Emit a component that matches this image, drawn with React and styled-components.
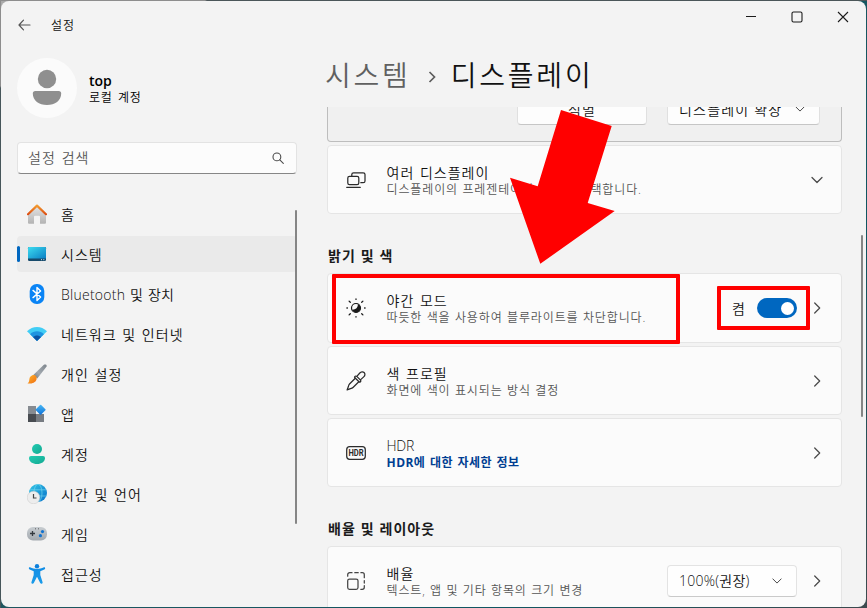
import React from "react";
import styled, { createGlobalStyle } from "styled-components";

const GlobalStyle = createGlobalStyle`
  html, body { margin: 0; padding: 0; overflow: hidden; }
  body { font-family: "Open Sans", "Noto Sans CJK KR", sans-serif; font-weight: 350; color: #111; }
  * { box-sizing: border-box; }
`;

const Desktop = styled.div`
  width: 867px;
  height: 608px;
  padding: 1px;
  background:
    linear-gradient(90deg, #8d8d8d 0 205px, #4b5659 207px 100%) top / 100% 1px no-repeat,
    linear-gradient(180deg, #8d8d8d 0 86px, #46565a 88px 100%) left / 1px 100% no-repeat,
    linear-gradient(135deg, #a9a9a9 0 8%, #2c555c 12%, #0f5662 75%, #3c4a4e 100%);
`;

const Window = styled.div`
  position: relative;
  width: 865px;
  height: 606px;
  display: flex;
  background: #f3f3f3;
  border-radius: 8px;
  overflow: hidden;
`;

const Sidebar = styled.aside`
  width: 310px;
  flex: none;
  padding: 0 14px 0 16px;
  display: flex;
  flex-direction: column;
`;

const TitleBar = styled.div`
  height: 48px;
  display: flex;
  align-items: center;
  gap: 20px;
`;

const BackButton = styled.div`
  width: 14px;
  display: flex;
`;

const AppName = styled.div`
  font-size: 12px;
  line-height: 16px;
  letter-spacing: 0.9px;
  padding-top: 2px;
`;

const Profile = styled.div`
  height: 60px;
  margin-top: 9px;
  display: flex;
  align-items: center;
  gap: 12px;
`;

const Avatar = styled.div`
  width: 60px;
  height: 60px;
  border-radius: 50%;
  background: #fbfbfb;
  display: flex;
`;

const ProfileName = styled.div`
  font-size: 14px;
  line-height: 16px;
  font-weight: 600;
  letter-spacing: -0.1px;
  margin-top: 4px;
  color: #000;
`;

const ProfileKind = styled.div`
  font-size: 12px;
  line-height: 18px;
  letter-spacing: 0.8px;
  word-spacing: 1.4px;
  color: #000;
`;

const SearchBox = styled.div`
  height: 32px;
  margin-top: 24px;
  padding: 0 12px 0 10px;
  display: flex;
  align-items: center;
  justify-content: space-between;
  background: #fcfcfc;
  border: 1px solid #e3e3e3;
  border-bottom-color: #868686;
  border-radius: 4px;
  font-size: 14px;
  line-height: 20px;
  letter-spacing: 1px;
  word-spacing: 1.3px;
  color: #5a5a5a;
`;

const NavList = styled.nav`
  margin-top: 22px;
  display: flex;
  flex-direction: column;
  gap: 4px;
`;

const NavItem = styled.div`
  position: relative;
  height: 36px;
  flex: none;
  padding-left: 10px;
  display: flex;
  align-items: center;
  gap: 14px;
  border-radius: 4px;
  background: ${(p) => (p.$active ? "#eaeaea" : "transparent")};
  font-size: 14px;
  line-height: 20px;
  white-space: nowrap;

  &::before {
    content: "";
    position: absolute;
    left: 0;
    top: 10px;
    width: 3px;
    height: 16px;
    border-radius: 2px;
    background: ${(p) => (p.$active ? "#0067c0" : "transparent")};
  }
`;

const NavIcon = styled.span`
  display: flex;
  margin-top: -1px;
`;

const NavLabel = styled.span`
  letter-spacing: ${(p) => p.$spacing ?? 1.05}px;
  word-spacing: 0.9px;
  padding-top: 2px;
`;

const Main = styled.main`
  flex: 1;
  min-width: 0;
  display: flex;
  flex-direction: column;
`;

const WindowControls = styled.div`
  height: 32px;
  padding-right: 17px;
  display: flex;
  align-items: center;
  justify-content: flex-end;
  gap: 34px;
`;

const Breadcrumb = styled.h1`
  margin: 0;
  height: 74px;
  padding: 10px 0 0 14px;
  display: flex;
  align-items: center;
  font-size: 28px;
  line-height: 40px;
  font-weight: 350;
  letter-spacing: 2.8px;
`;

const Crumb = styled.span`
  color: ${(p) => (p.$muted ? "#606060" : "#111")};
`;

const CrumbChevron = styled.span`
  display: flex;
  margin: 3px 13.5px 0 17.5px;
`;

const ScrollArea = styled.div`
  flex: 1;
  min-height: 0;
  overflow: hidden;
  padding: 0 24px 0 16px;
  display: flex;
  flex-direction: column;
`;

const PreviewPanel = styled.div`
  height: 35px;
  flex: none;
  padding-right: 21px;
  display: flex;
  justify-content: flex-end;
  align-items: flex-start;
  gap: 20px;
  background: #f0f0f0;
  border: 1px solid #bdbdbd;
  border-top: 0;
  border-radius: 0 0 4px 4px;
`;

const PanelButton = styled.div`
  height: 18px;
  width: ${(p) => p.$width}px;
  padding: ${(p) => (p.$select ? "0 14px 0 11px" : "0")};
  display: flex;
  align-items: flex-end;
  justify-content: ${(p) => (p.$select ? "space-between" : "center")};
  background: #fdfdfd;
  border: 1px solid #e0e0e0;
  border-top: 0;
  border-bottom-color: #c6c6c6;
  border-radius: 0 0 4px 4px;
  overflow: hidden;
  font-size: 14px;
  line-height: 20px;
  letter-spacing: 1.2px;
  white-space: nowrap;
`;

const ButtonText = styled.span`
  margin-bottom: 4px;
`;

const ButtonChevron = styled.span`
  display: flex;
  margin-bottom: 10px;
`;

const Card = styled.section`
  height: ${(p) => p.$height ?? 69}px;
  flex: none;
  margin-top: ${(p) => p.$gap ?? 3}px;
  padding: 0 18px;
  display: flex;
  align-items: center;
  background: #fbfbfb;
  border: 1px solid #e5e5e5;
  border-radius: 4px;
`;

const CardIcon = styled.div`
  width: 20px;
  height: 20px;
  display: flex;
  flex: none;
`;

const CardText = styled.div`
  flex: 1;
  min-width: 0;
  margin-left: 20.5px;
  padding-top: 4px;
  white-space: nowrap;
`;

const CardTitle = styled.div`
  font-size: 14px;
  line-height: 16px;
  letter-spacing: ${(p) => p.$spacing ?? 1}px;
  word-spacing: 1px;
`;

const CardNote = styled.div`
  font-size: 12px;
  line-height: 18px;
  letter-spacing: 0.88px;
  word-spacing: 0.4px;
  color: #555;
`;

const CardLink = styled.div`
  font-size: 12px;
  line-height: 18px;
  font-weight: 700;
  letter-spacing: 0.45px;
  word-spacing: 1px;
  color: #003e92;
`;

const SectionTitle = styled.h2`
  margin: ${(p) => p.$gap}px 0 0;
  padding-left: 1px;
  font-size: 14px;
  line-height: 20px;
  font-weight: 700;
  letter-spacing: 1.1px;
  word-spacing: 0;
  color: #1b1b1b;
`;

const StateLabel = styled.span`
  font-size: 14px;
  line-height: 20px;
  margin-right: 12px;
  padding-top: 2px;
`;

const Toggle = styled.div`
  width: 40px;
  height: 20px;
  padding-right: 3.5px;
  margin-right: 14px;
  display: flex;
  align-items: center;
  justify-content: flex-end;
  border-radius: 10px;
  background: #0067c0;
`;

const Knob = styled.div`
  width: 13px;
  height: 13px;
  border-radius: 50%;
  background: #fff;
`;

const ScaleSelect = styled.div`
  width: 130px;
  height: 32px;
  margin-right: 14px;
  padding: 0 14px 0 11px;
  display: flex;
  align-items: center;
  justify-content: space-between;
  background: #fefefe;
  border: 1px solid #e3e3e3;
  border-bottom-color: #cacaca;
  border-radius: 4px;
  font-size: 14px;
  line-height: 20px;
  letter-spacing: 0.25px;
`;

const ScrollThumb = styled.div`
  position: absolute;
  left: ${(p) => p.$x}px;
  top: ${(p) => p.$y}px;
  width: 2px;
  height: ${(p) => p.$length}px;
  border-radius: 1px;
  background: #858585;
`;

const Highlight = styled.div`
  position: absolute;
  left: ${(p) => p.$x}px;
  top: ${(p) => p.$y}px;
  width: ${(p) => p.$w}px;
  height: ${(p) => p.$h}px;
  border: 4px solid #f00;
  border-radius: 1px;
`;

const PointerArrow = styled.svg`
  position: absolute;
  left: 509px;
  top: 109px;
`;

const Chevron = ({ down, small }) => (
  <svg width={small ? 10 : 12} height={small ? 10 : 12} viewBox="0 0 12 12" fill="none" stroke="#4a4a4a" strokeWidth={small ? 1.2 : 1.25} strokeLinecap="round" strokeLinejoin="round">
    <path d={down ? "M1 3.500 6 8.500 11 3.500" : "M3.700 1 8.700 6 3.700 11"} />
  </svg>
);

const HomeIcon = () => (
  <svg width="20" height="20" viewBox="0 0 20 20">
    <defs>
      <linearGradient id="homeWall" x1="0" y1="0" x2="0" y2="1"><stop stopColor="#e6e6e6" /><stop offset="1" stopColor="#b3b3b3" /></linearGradient>
      <linearGradient id="homeRoof" x1="0" y1="0" x2="0" y2="1"><stop stopColor="#f29a2e" /><stop offset="1" stopColor="#dd4f14" /></linearGradient>
    </defs>
    <path d="M1 9.500 10 1.500l9 8v9.300a1 1 0 0 1-1 1h-5v-7a1 1 0 0 0-1-1H8a1 1 0 0 0-1 1v7H2a1 1 0 0 1-1-1z" fill="url(#homeWall)" />
    <path d="M1 10.200 10 1.600l9 8.600" fill="none" stroke="url(#homeRoof)" strokeWidth="2.200" strokeLinecap="round" strokeLinejoin="round" />
  </svg>
);

const SystemIcon = () => (
  <svg width="20" height="20" viewBox="0 0 20 20">
    <defs><linearGradient id="sysScreen" x1="0" y1="0" x2="1" y2="1"><stop stopColor="#3ddcf0" /><stop offset="1" stopColor="#0a7fc4" /></linearGradient></defs>
    <rect x="1" y="3" width="18" height="14" rx="1.200" fill="#174a6b" />
    <path d="M2.200 3h15.600A1.200 1.200 0 0 1 19 4.200V14.500H1V4.200A1.200 1.200 0 0 1 2.200 3z" fill="url(#sysScreen)" />
    <path d="M14 15.700h1M16.300 15.700h1" stroke="#c9e8f5" strokeWidth="1" />
  </svg>
);

const BluetoothIcon = () => (
  <svg width="20" height="20" viewBox="0 0 20 20">
    <rect x="2.700" y="0" width="14.600" height="20" rx="7" fill="#0a84f5" />
    <path d="M6 6.400 13.600 13 10 16.500V3.500L13.600 7 6 13.600" fill="none" stroke="#fff" strokeWidth="1.400" strokeLinejoin="round" strokeLinecap="round" />
  </svg>
);

const WifiIcon = () => (
  <svg width="20" height="20" viewBox="0 0 20 20">
    <path d="M10 17 0 7.200C5.700 1.500 14.300 1.500 20 7.200z" fill="#41cdf5" />
    <path d="M10 17 3.100 10.200C7 6.400 13 6.400 16.900 10.200z" fill="#1e93e0" />
    <path d="M10 17 6 13C8.200 10.900 11.800 10.900 14 13z" fill="#0a53a5" />
  </svg>
);

const BrushIcon = () => (
  <svg width="20" height="20" viewBox="0 0 20 20">
    <defs>
      <linearGradient id="brushHandle" x1="1" y1="0" x2="0" y2="1"><stop stopColor="#7d858c" /><stop offset=".6" stopColor="#a2a9b0" /><stop offset="1" stopColor="#737b82" /></linearGradient>
      <linearGradient id="brushTip" x1="0" y1="0" x2="1" y2="1"><stop stopColor="#ffb52b" /><stop offset="1" stopColor="#ef6c12" /></linearGradient>
    </defs>
    <path d="M6.300 11 16.600 1C18 .100 20.100 .600 19.600 2.600L10.300 14.400z" fill="url(#brushHandle)" />
    <path d="M5 11.500c2.500-1.500 5.500 1 4.500 4C8.500 19 4 20 .5 19.500c1.800-1.300 1.500-2.500 2-5 .2-1.400 1.200-2.500 2.500-3z" fill="url(#brushTip)" />
  </svg>
);

const AppsIcon = () => (
  <svg width="20" height="20" viewBox="0 0 20 20">
    <defs><linearGradient id="appTile" x1="0" y1="0" x2="1" y2="1"><stop stopColor="#49b9f5" /><stop offset="1" stopColor="#0d70d8" /></linearGradient></defs>
    <path d="M1 2h8v8H1z" fill="#868b91" />
    <path d="M1 10h8v8H1z" fill="#484c51" />
    <path d="M9 10h8v8H9z" fill="#777c82" />
    <rect x="9.900" y="1.900" width="7.600" height="7.600" rx=".8" transform="rotate(45 13.600 5.600)" fill="url(#appTile)" />
  </svg>
);

const AccountIcon = () => (
  <svg width="20" height="20" viewBox="0 0 20 20">
    <defs><linearGradient id="acct" x1="0" y1="0" x2="1" y2="1"><stop stopColor="#23cbb1" /><stop offset="1" stopColor="#13a992" /></linearGradient></defs>
    <circle cx="10" cy="5" r="5" fill="url(#acct)" />
    <path d="M4 12h12a2 2 0 0 1 2 2c0 3.800-3.600 6-8 6s-8-2.200-8-6a2 2 0 0 1 2-2z" fill="url(#acct)" />
  </svg>
);

const TimeIcon = () => (
  <svg width="20" height="20" viewBox="0 0 20 20">
    <defs><linearGradient id="globe" x1="0" y1="0" x2="1" y2="1"><stop stopColor="#35c8e6" /><stop offset="1" stopColor="#0871c9" /></linearGradient></defs>
    <circle cx="11" cy="9" r="9" fill="url(#globe)" />
    <g fill="none" stroke="#7ddcf2" strokeWidth=".6">
      <ellipse cx="11" cy="9" rx="4" ry="8.800" />
      <path d="M3 5.800h16M2.500 12h17" />
    </g>
    <circle cx="6.500" cy="13.500" r="6.300" fill="#ededed" stroke="#c9c9c9" strokeWidth=".5" />
    <path d="M6.500 10v4h3" fill="none" stroke="#454545" strokeWidth="1.200" />
  </svg>
);

const GameIcon = () => (
  <svg width="20" height="20" viewBox="0 0 20 20">
    <defs><linearGradient id="pad" x1="0" y1="0" x2="0" y2="1"><stop stopColor="#c8cdd1" /><stop offset="1" stopColor="#a3a9af" /></linearGradient></defs>
    <rect x="0" y="3" width="20" height="13.400" rx="6" fill="url(#pad)" />
    <path d="M5.500 7v5M3 9.500h5" stroke="#353a3f" strokeWidth="1.300" />
    <circle cx="15.500" cy="7.600" r="1.600" fill="#1173d0" />
    <circle cx="13.400" cy="11.700" r="1.600" fill="#1173d0" />
    <path d="M8 4.800h1M11 4.800h1" stroke="#555" strokeWidth=".9" />
  </svg>
);

const AccessIcon = () => (
  <svg width="20" height="20" viewBox="0 0 20 20">
    <defs><linearGradient id="acc" x1="0" y1="0" x2="0" y2="1"><stop stopColor="#128de5" /><stop offset="1" stopColor="#1b9be9" /></linearGradient></defs>
    <circle cx="10" cy="2.200" r="2.200" fill="#0d80dc" />
    <path d="M3 3.300c2.500 1 4.500 1.700 7 1.700s4.500-.7 7-1.700c1.400-.3 1.600 1.700.3 2.200L13.300 7.300V11l2.300 7.200c.3 1.700-1.700 2.200-2.400.8L10 12.800 6.800 19c-.7 1.400-2.700.9-2.400-.8L6.700 11V7.300L2.700 5.500C1.400 5 1.600 3 3 3.300z" fill="url(#acc)" />
  </svg>
);

const line = { fill: "none", stroke: "#2b2b2b", strokeWidth: 1.25, strokeLinecap: "round", strokeLinejoin: "round" };

const MultiDisplayIcon = () => (
  <svg width="20" height="20" viewBox="0 0 20 20" {...line}>
    <path d="M5.800 6V4.600A1.800 1.800 0 0 1 7.600 2.800h9.600A1.800 1.800 0 0 1 19 4.600v6.300a1.800 1.800 0 0 1-1.800 1.800h-2.400" />
    <rect x="1.800" y="6.300" width="11" height="8.300" rx="1.700" />
    <path d="M.7 17.300h13.600" />
  </svg>
);

const NightIcon = () => (
  <svg width="20" height="20" viewBox="0 0 20 20" fill="none" stroke="#1b1b1b" strokeLinecap="round">
    <circle cx="10" cy="10" r="4.500" strokeWidth="1.200" />
    <path d="M11.800 5.900C12.300 9.600 9.300 11.900 5.900 11.600A4.500 4.500 0 1 0 11.800 5.900z" fill="#1b1b1b" stroke="none" />
    <path d="M10 .9v.5M10 18.600v.5M.9 10h.5M18.600 10h.5M3.100 3.100l1.200 1.200M15.700 15.700l1.200 1.200M16.900 3.100l-1.200 1.200M4.300 15.700l-1.200 1.200" strokeWidth="1.300" />
  </svg>
);

const DropperIcon = () => (
  <svg width="20" height="20" viewBox="0 0 20 20" {...line}>
    <path d="M9.300 7.200 3.500 13c-.7.700-.9 1.500-1.100 2.500L1.100 18.900l3.400-1.300c1-.2 1.800-.4 2.500-1.100l5.800-5.800" />
    <path d="M8.900 6.800c-.4-.4-.4-1 0-1.400s1.300-.6 1.900 0l3-3.400c1.300-1.500 3.200-1.600 4.300-.5 1.200 1.200 1.100 3.100-.4 4.400l-3.300 3c.6.600.5 1.400 0 1.900-.4.400-1 .4-1.400 0z" />
    <path d="M11 5.600l3.300 3.300" />
  </svg>
);

const HdrText = styled.text`
  font: 700 9px "Roboto", "Liberation Sans", sans-serif;
  fill: #2b2b2b;
  stroke: none;
`;

const HdrIcon = () => (
  <svg width="20" height="20" viewBox="0 0 20 20" {...line}>
    <rect x=".7" y="3.700" width="18.600" height="12.600" rx="3" />
    <HdrText x="2.500" y="13.100" textLength="15.200" lengthAdjust="spacingAndGlyphs">HDR</HdrText>
  </svg>
);

const ScaleIcon = () => (
  <svg width="20" height="20" viewBox="0 0 20 20" {...line} stroke="#444">
    <rect x="1.700" y="8" width="10.300" height="10.300" rx="1.800" />
    <path d="M1.700 5.200V3.700a2 2 0 0 1 2-2h2.300M8.800 1.700h3.400M14.900 1.700h1.400a2 2 0 0 1 2 2v3M18.300 9.500v2.500M18.300 14.500v1.800a2 2 0 0 1-2 2h-1.500" />
  </svg>
);

const NAV = [
  { label: "홈", icon: HomeIcon },
  { label: "시스템", icon: SystemIcon, active: true },
  { label: "Bluetooth 및 장치", icon: BluetoothIcon, spacing: 0.25 },
  { label: "네트워크 및 인터넷", icon: WifiIcon },
  { label: "개인 설정", icon: BrushIcon },
  { label: "앱", icon: AppsIcon },
  { label: "계정", icon: AccountIcon },
  { label: "시간 및 언어", icon: TimeIcon },
  { label: "게임", icon: GameIcon },
  { label: "접근성", icon: AccessIcon },
];

const SettingCard = ({ icon: Icon, title, titleSpacing, note, link, height, gap, children }) => (
  <Card $height={height} $gap={gap}>
    <CardIcon><Icon /></CardIcon>
    <CardText>
      <CardTitle $spacing={titleSpacing}>{title}</CardTitle>
      {note && <CardNote>{note}</CardNote>}
      {link && <CardLink>{link}</CardLink>}
    </CardText>
    {children}
  </Card>
);

export default function App() {
  return (
    <Desktop>
      <GlobalStyle />
      <Window>
        <Sidebar>
          <TitleBar>
            <BackButton>
              <svg width="14" height="12" viewBox="0 0 14 12" fill="none" stroke="#555" strokeWidth="1.200" strokeLinecap="round" strokeLinejoin="round">
                <path d="M13 6H2M6.500 1.200 2 6l4.500 4.800" />
              </svg>
            </BackButton>
            <AppName>설정</AppName>
          </TitleBar>
          <Profile>
            <Avatar>
              <svg width="60" height="60" viewBox="0 0 60 60" fill="#8f8f8f">
                <circle cx="30" cy="21" r="9.200" />
                <path d="M18.300 33h23.400a2.500 2.500 0 0 1 2.500 2.500C44.200 42.500 38 47 30 47s-14.200-4.500-14.200-11.500a2.500 2.500 0 0 1 2.500-2.500z" />
              </svg>
            </Avatar>
            <div>
              <ProfileName>top</ProfileName>
              <ProfileKind>로컬 계정</ProfileKind>
            </div>
          </Profile>
          <SearchBox>
            설정 검색
            <svg width="12" height="12" viewBox="0 0 12 12" fill="none" stroke="#4a4a4a" strokeWidth="1.100" strokeLinecap="round">
              <circle cx="4.900" cy="4.900" r="3.900" />
              <path d="m7.800 7.800 3.500 3.500" />
            </svg>
          </SearchBox>
          <NavList>
            {NAV.map(({ label, icon: Icon, active, spacing }) => (
              <NavItem key={label} $active={active}>
                <NavIcon><Icon /></NavIcon>
                <NavLabel $spacing={spacing}>{label}</NavLabel>
              </NavItem>
            ))}
          </NavList>
        </Sidebar>

        <Main>
          <WindowControls>
            {["M1 5.500h10", "M2.500 1h7A1.500 1.500 0 0 1 11 2.500v7A1.500 1.500 0 0 1 9.500 11h-7A1.500 1.500 0 0 1 1 9.500v-7A1.500 1.500 0 0 1 2.500 1z", "m1 1 10 10M11 1 1 11"].map((d) => (
              <svg key={d} width="12" height="12" viewBox="0 0 12 12" fill="none" stroke="#1b1b1b" strokeWidth="1.100">
                <path d={d} />
              </svg>
            ))}
          </WindowControls>
          <Breadcrumb>
            <Crumb $muted>시스템</Crumb>
            <CrumbChevron>
              <svg width="9" height="14" viewBox="0 0 9 14" fill="none" stroke="#5c5c5c" strokeWidth="1.700">
                <path d="m1.500 2 5 5-5 5" />
              </svg>
            </CrumbChevron>
            <Crumb>디스플레이</Crumb>
          </Breadcrumb>
          <ScrollArea>
            <PreviewPanel>
              <PanelButton $width={130}>
                <ButtonText>식별</ButtonText>
              </PanelButton>
              <PanelButton $width={153} $select>
                <ButtonText>디스플레이 확장</ButtonText>
                <ButtonChevron><Chevron down small /></ButtonChevron>
              </PanelButton>
            </PreviewPanel>
            <SettingCard icon={MultiDisplayIcon} title="여러 디스플레이" note="디스플레이의 프레젠테이션 모드를 선택합니다.">
              <Chevron down />
            </SettingCard>

            <SectionTitle $gap={32}>밝기 및 색</SectionTitle>
            <SettingCard icon={NightIcon} height={70} gap={7} title="야간 모드" note="따듯한 색을 사용하여 블루라이트를 차단합니다.">
              <StateLabel>켬</StateLabel>
              <Toggle role="switch" aria-checked="true"><Knob /></Toggle>
              <Chevron />
            </SettingCard>
            <SettingCard icon={DropperIcon} title="색 프로필" note="화면에 색이 표시되는 방식 결정">
              <Chevron />
            </SettingCard>
            <SettingCard icon={HdrIcon} title="HDR" titleSpacing={-0.2} link="HDR에 대한 자세한 정보">
              <Chevron />
            </SettingCard>

            <SectionTitle $gap={32}>배율 및 레이아웃</SectionTitle>
            <SettingCard icon={ScaleIcon} gap={7} height={70} title="배율" note="텍스트, 앱 및 기타 항목의 크기 변경">
              <ScaleSelect>
                100%(권장)
                <Chevron down small />
              </ScaleSelect>
              <Chevron />
            </SettingCard>
          </ScrollArea>
        </Main>

        <ScrollThumb $x={294} $y={209} $length={314} />
        <ScrollThumb $x={860} $y={234} $length={182} />
        <Highlight $x={331} $y={273} $w={348} $h={70} />
        <Highlight $x={716} $y={285} $w={93} $h={44} />
        <PointerArrow width="106" height="156" viewBox="510 110 106 156" fill="#f00">
          <path d="M561 110 611.700 126 587.700 203 614.700 211 540.300 263.800 510 177.700 537.700 186.300z" />
        </PointerArrow>
      </Window>
    </Desktop>
  );
}
